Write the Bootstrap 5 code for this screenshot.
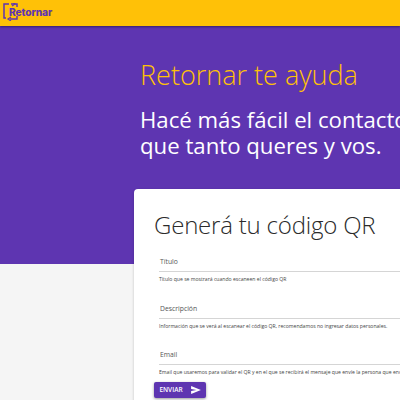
<!DOCTYPE html>
<html lang="es">
<head>
    <meta charset="UTF-8">
    <title>Retornar</title>
    <link href="https://cdn.jsdelivr.net/npm/bootstrap@5.3.0/dist/css/bootstrap.min.css" rel="stylesheet">
    <style>
        html, body { height: 400px; overflow: hidden; }
        body { background: #f5f5f5; font-family: "Open Sans", "Noto Sans", sans-serif; }
        .top-bar { height: 26px; background: #ffc107; padding: 3px 0 0 3px; box-shadow: 0 1px 2px rgba(0,0,0,.4); position: relative; }
        .brand-name { font-family: "Inter", sans-serif; font-weight: 800; font-size: 10.2px; line-height: 1; color: #5e35b1; margin-left: -10px; padding-top: 4px; letter-spacing: -.1px; }
        .hero-area { height: 238px; background: #5e35b1; padding: 30px 0 0 140px; white-space: nowrap; }
        .hero-title { font-size: 27px; line-height: 38px; color: #ffc107; font-weight: 300; margin: 0 0 13px; }
        .hero-text { font-size: 22.2px; line-height: 26px; color: #fff; font-weight: 400; margin: 0; }
        .form-panel { width: 640px; height: 300px; margin: -75px 0 0 134px; background: #fff; padding: 19px 0 0 20px; border-radius: 4px; box-shadow: 0 1px 3px rgba(0,0,0,.2); white-space: nowrap; }
        .form-title { font-size: 24px; line-height: 33px; color: #2b2b2b; font-weight: 300; margin: 0 0 16px; letter-spacing: -.2px; }
        .form-field { margin-left: 5px; height: 46.5px; }
        .field-label { font-size: 6.8px; line-height: 10px; color: #555; padding: 0 0 4px 1px; border-bottom: 1px solid #d5d5d5; }
        .field-hint { font-size: 5.1px; line-height: 7px; color: #444; margin-top: 4px; }
        .send-btn { width: 52px; height: 16px; margin-top: -15px; background: #5e35b1; color: #fff; font-size: 6.5px; font-weight: 600; border: 0; border-radius: 2px; box-shadow: 0 1px 3px rgba(0,0,0,.4); padding: 0; }
    </style>
</head>
<body>

<div class="top-bar d-flex align-items-start">
    <svg width="16" height="18" viewBox="0 0 16 18" fill="none" stroke="#5e35b1" stroke-width="1.5" class="flex-shrink-0">
        <path d="M6 1H1V15H3"/>
        <path d="M8 1H14V4"/>
        <path d="M9 -1L12 1L9 3" stroke-width="1.2"/>
        <path d="M14 13V16H7"/>
        <path d="M8 14L5 16L8 18" stroke-width="1.2"/>
    </svg>
    <span class="brand-name">Retornar</span>
</div>

<div class="hero-area">
    <h1 class="hero-title">Retornar te ayuda</h1>
    <p class="hero-text">Hacé más fácil el contacto entre lo<br>que tanto queres y vos.</p>
</div>

<div class="form-panel">
    <h2 class="form-title">Generá tu código QR</h2>
    <div class="form-field">
        <div class="field-label">Título</div>
        <div class="field-hint">Título que se mostrará cuando escaneen el código QR</div>
    </div>
    <div class="form-field">
        <div class="field-label">Descripción</div>
        <div class="field-hint">Información que se verá al escanear el código QR, recomendamos no ingresar datos personales.</div>
    </div>
    <div class="form-field">
        <div class="field-label">Email</div>
        <div class="field-hint">Email que usaremos para validar el QR y en el que se recibirá el mensaje que envíe la persona que encuentre tu objeto.</div>
    </div>
    <button type="button" class="send-btn btn d-flex align-items-center justify-content-center gap-2">
        ENVIAR
        <svg width="10" height="8" viewBox="0 0 11 9" fill="#fff"><path d="M0 0L11 4.5L0 9V5.5L6 4.5L0 3.5Z"/></svg>
    </button>
</div>

</body>
</html>
